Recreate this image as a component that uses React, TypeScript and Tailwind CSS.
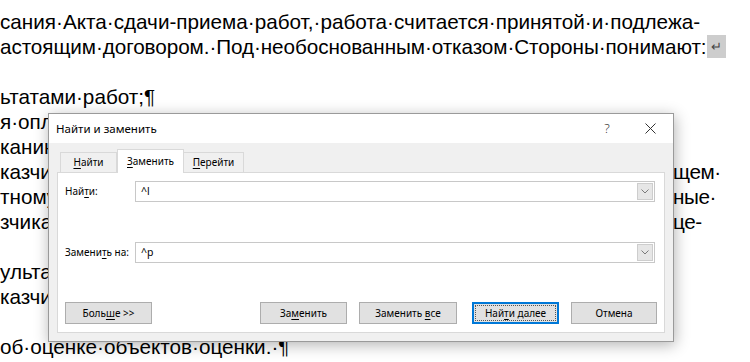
import type { ReactNode } from 'react'

const docLines: { left: string; right?: string }[] = [
  { left: 'сания·Акта·сдачи-приема·работ,·работа·считается·принятой·и·подлежа-' },
  { left: 'астоящим·договором.·Под·необоснованным·отказом·Стороны·понимают:' },
  { left: '' },
  { left: 'ьтатами·работ;¶' },
  { left: 'я·оплаты·выполненных·работ·и·подписания·документов' },
  { left: 'канию·Заказчика·и·иных·требований' },
  { left: 'казчика·о·предоставлении·результатов', right: 'щем·' },
  { left: 'тному·заключению·эксперта·и·обоснованные·', right: 'ные·' },
  { left: 'зчика·по·настоящему·Договору·оце', right: 'це-' },
  { left: '' },
  { left: 'ультатами·работ' },
  { left: 'казчика·по·оплате' },
  { left: '' },
  { left: 'об·оценке·объектов·оценки.·¶' },
]

function U({ children }: { children: ReactNode }) {
  return <span className="underline underline-offset-[2px] decoration-1">{children}</span>
}

function Combo({ value }: { value: string }) {
  return (
    <div className="flex h-[21px] w-[520px] items-center border border-[#c8c8c8] bg-white">
      <span className="pl-[5px] text-[10.5px] text-black">{value}</span>
      <div className="mr-px ml-auto flex h-[17px] w-[16px] items-center justify-center border border-[#cdcdcd] bg-[#e6e6e6]">
        <svg width="8" height="5" viewBox="0 0 8 5" fill="none">
          <path d="M0.5 0.5 L4 4 L7.5 0.5" stroke="#7a7a7a" strokeWidth="1" />
        </svg>
      </div>
    </div>
  )
}

function Btn({ children, width, primary }: { children: ReactNode; width: string; primary?: boolean }) {
  return (
    <button
      className={
        primary
          ? `flex h-[22px] ${width} items-center justify-center border border-[#0078d7] bg-[#e1e1e1] text-[10px] text-black shadow-[inset_0_0_0_1px_#0078d7] outline-1 outline-offset-[-4px] outline-dotted outline-[#555]`
          : `flex h-[22px] ${width} items-center justify-center border border-[#adadad] bg-[#e1e1e1] text-[10px] text-black`
      }
    >
      <span className="whitespace-pre">{children}</span>
    </button>
  )
}

export default function App() {
  return (
    <div className="relative h-[362px] w-[750px] overflow-hidden bg-white">
      <div className="pt-[9px] font-['Liberation_Sans',Arial,sans-serif] text-[20.7px] leading-[25px] text-black">
        {docLines.map((line, i) => (
          <div key={i} className="flex h-[25px] items-center whitespace-pre">
            <span
              className={
                line.right ? 'w-[673px] shrink-0 overflow-hidden' : i === 1 ? 'tracking-[-0.08px]' : ''
              }
            >
              {line.left}
            </span>
            {line.right && <span className="tracking-[-0.4px]">{line.right}</span>}
            {i === 1 && (
              <span className="ml-px flex h-[23px] w-[19px] items-center justify-center bg-[#cdcdcd] text-[13px] text-[#444]">
                ↵
              </span>
            )}
          </div>
        ))}
      </div>

      <div className="absolute top-[113px] left-[48px] flex h-[229px] w-[626px] flex-col border border-[#9a9a9a] bg-[#f0f0f0] font-['Noto_Sans',sans-serif] text-black shadow-[1px_3px_14px_rgba(0,0,0,0.3)]">
        <div className="flex h-[29px] shrink-0 items-center bg-white pl-[7px]">
          <span className="text-[11.5px]">Найти и заменить</span>
          <div className="ml-auto mr-[8px] flex items-center gap-[13px]">
            <span className="flex w-[30px] justify-center text-[13px] font-light text-[#333]">?</span>
            <span className="flex w-[30px] justify-center">
              <svg width="11" height="11" viewBox="0 0 11 11">
                <path d="M0.5 0.5 L10.5 10.5 M10.5 0.5 L0.5 10.5" stroke="#333" strokeWidth="1" />
              </svg>
            </span>
          </div>
        </div>

        <div className="flex flex-1 flex-col px-[8px] pb-[8px]">
          <div className="flex h-[29px] items-end pl-[3px] text-[10px]">
            <div className="flex h-[20px] w-[57px] items-center justify-center border border-b-0 border-[#d9d9d9] bg-[#f0f0f0]">
              <span>
                <U>Н</U>айти
              </span>
            </div>
            <div className="relative z-10 -mb-px flex h-[24px] w-[67px] items-center justify-center border border-b-0 border-[#d9d9d9] bg-white">
              <span>
                <U>З</U>аменить
              </span>
            </div>
            <div className="flex h-[20px] w-[60px] items-center justify-center border border-b-0 border-l-0 border-[#d9d9d9] bg-[#f0f0f0]">
              <span>
                <U>П</U>ерейти
              </span>
            </div>
          </div>

          <div className="flex flex-1 flex-col border border-[#d9d9d9] bg-white px-[7px] pt-[8px] text-[10px]">
            <div className="flex items-center">
              <span className="w-[70px]">
                Най<U>т</U>и:
              </span>
              <Combo value="^l" />
            </div>
            <div className="mt-[40px] flex items-center">
              <span className="w-[70px] whitespace-pre">
                Замени<U>т</U>ь на:
              </span>
              <Combo value="^p" />
            </div>
            <div className="mt-[39px] flex items-center">
              <Btn width="w-[87px]">
                Боль<U>ш</U>е &gt;&gt;
              </Btn>
              <div className="ml-auto flex items-center">
                <Btn width="w-[87px]">
                  За<U>м</U>енить
                </Btn>
                <div className="ml-[12px]">
                  <Btn width="w-[98px]">
                    Заменить <U>в</U>се
                  </Btn>
                </div>
                <div className="ml-[15px]">
                  <Btn width="w-[87px]" primary>
                    Най<U>т</U>и далее
                  </Btn>
                </div>
                <div className="ml-[12px]">
                  <Btn width="w-[86px]">Отмена</Btn>
                </div>
              </div>
            </div>
          </div>
        </div>
      </div>
    </div>
  )
}
